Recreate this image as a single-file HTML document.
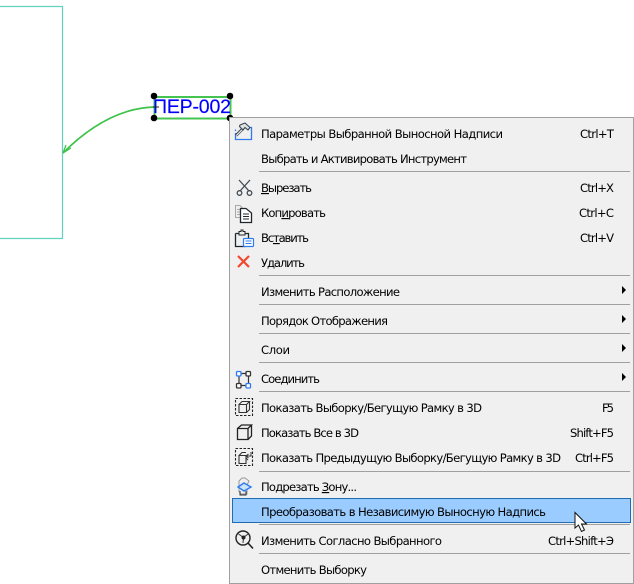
<!DOCTYPE html>
<html><head><meta charset="utf-8"><style>
html,body{margin:0;padding:0;background:#fff;width:634px;height:584px;overflow:hidden}
svg{display:block}
.t{font-family:"DejaVu Sans",sans-serif;font-size:11.6px;fill:#000}
</style></head><body>
<svg width="634" height="584" viewBox="0 0 634 584" xmlns="http://www.w3.org/2000/svg">
<rect width="634" height="584" fill="#fff"/>
<path d="M0 6.500H62.500V238.500H0" fill="none" stroke="#62d2bc" stroke-width="1.200"/>
<path d="M154 107C122 108 92 124 63 153" fill="none" stroke="#3fc24a" stroke-width="1.700"/>
<path d="M63 153L66 145M63 153L71 148" fill="none" stroke="#3fc24a" stroke-width="1.300"/>
<rect x="154.500" y="97" width="76" height="21.500" fill="none" stroke="#45c452" stroke-width="2"/>
<text x="153" y="113" font-family="Liberation Sans,sans-serif" font-size="19.500" fill="#0000ff" stroke="#0000ff" stroke-width="0.150" textLength="78" lengthAdjust="spacing">ПЕР-002</text>
<path d="M153 107H159" stroke="#222"/>
<g fill="#000"><circle cx="154" cy="96" r="3.300"/><circle cx="230" cy="96" r="3.300"/><circle cx="154" cy="118" r="3.300"/><circle cx="230" cy="118" r="3.300"/></g>

<rect x="229.500" y="117.500" width="404" height="466" fill="#f0f0f0" stroke="#a0a0a0"/>
<rect x="232.500" y="498.500" width="398" height="24" fill="#9accff" stroke="#1f6cb5"/>
<g fill="#a0a0a0">
<rect x="259" y="171" width="371" height="1"/><rect x="259" y="275" width="371" height="1"/>
<rect x="259" y="304" width="371" height="1"/><rect x="259" y="333" width="371" height="1"/>
<rect x="259" y="362" width="371" height="1"/><rect x="259" y="391" width="371" height="1"/>
<rect x="259" y="471" width="371" height="1"/><rect x="259" y="524" width="371" height="1"/>
<rect x="259" y="553" width="371" height="1"/>
</g>

<g class="t">
<text class="t" x="261" y="138" textLength="242">Параметры Выбранной Выносной Надписи</text>
<text class="t" x="261" y="163" textLength="206">Выбрать и Активировать Инструмент</text>
<text class="t" x="261" y="192" textLength="51"><tspan text-decoration="underline">В</tspan>ырезать</text>
<text class="t" x="261" y="217" textLength="65">Коп<tspan text-decoration="underline">и</tspan>ровать</text>
<text class="t" x="261" y="242" textLength="48">Вс<tspan text-decoration="underline">т</tspan>авить</text>
<text class="t" x="261" y="267" textLength="44">Удалить</text>
<text class="t" x="261" y="296" textLength="139">Изменить Расположение</text>
<text class="t" x="261" y="325" textLength="127">Порядок Отображения</text>
<text class="t" x="261" y="354" textLength="29">Слои</text>
<text class="t" x="261" y="383" textLength="59">Соединить</text>
<text class="t" x="261" y="412" textLength="221">Показать Выборку/Бегущую Рамку в 3D</text>
<text class="t" x="261" y="437" textLength="98">Показать Все в 3D</text>
<text class="t" x="261" y="462" textLength="300">Показать Предыдущую Выборку/Бегущую Рамку в 3D</text>
<text class="t" x="261" y="491" textLength="96">Подрезать <tspan text-decoration="underline">З</tspan>ону...</text>
<text class="t" x="261" y="516" textLength="285">Преобразовать в Независимую Выносную Надпись</text>
<text class="t" x="261" y="545" textLength="181">Изменить Согласно Выбранного</text>
<text class="t" x="261" y="574" textLength="106">Отменить Выборку</text>
<text class="t" x="580" y="138" textLength="34">Ctrl+T</text>
<text class="t" x="580" y="192" textLength="34">Ctrl+X</text>
<text class="t" x="579" y="217" textLength="35">Ctrl+C</text>
<text class="t" x="580" y="242" textLength="34">Ctrl+V</text>
<text class="t" x="602" y="412" textLength="12">F5</text>
<text class="t" x="570" y="437" textLength="44">Shift+F5</text>
<text class="t" x="575" y="462" textLength="39">Ctrl+F5</text>
<text class="t" x="548" y="545" textLength="66">Ctrl+Shift+Э</text>
</g>

<g fill="#000">
<path d="M622 286l4 4-4 4z"/><path d="M622 315l4 4-4 4z"/><path d="M622 344l4 4-4 4z"/><path d="M622 373l4 4-4 4z"/>
</g>

<!-- hammer / params -->
<path d="M235.500 133V139.500H251.500V127.500H248M235.500 129.500V131" fill="none" stroke="#2e7cf0" stroke-width="1.300"/>
<path d="M236 135.500L243 128.500" stroke="#3a4650" stroke-width="3" fill="none"/>
<path d="M236.300 135.500L243 128.800" stroke="#e8e8e8" stroke-width="1.200" fill="none"/>
<path d="M240 125L245 123L250 127.500L248 130L245 127.500L243 130L239.500 126.500Z" fill="#dfe3e6" stroke="#3a4650" stroke-width="1.100"/>
<!-- scissors -->
<g fill="none" stroke="#3f4a54" stroke-width="1.300">
<path d="M239 180L249 191M250 180L240 191"/>
<circle cx="239.500" cy="193" r="2.300"/><circle cx="249.500" cy="193" r="2.300"/>
</g>
<!-- copy -->
<path d="M235.500 205.500H240L242 207.500V217.500H235.500Z" fill="#f0f0f0" stroke="#a8a8a8"/>
<path d="M237 209.500H240M237 212H240M237 214.500H240" stroke="#a8a8a8"/>
<path d="M240.500 208.500H246L251.500 213V222.500H240.500Z" fill="#fff" stroke="#1f262c" stroke-width="1.300"/>
<path d="M243 214H249M243 216.500H249M243 219H249" stroke="#1f262c"/>
<!-- paste -->
<path d="M235.500 233.500H239M245 233.500H248.500V238M245.500 246.500H235.500V233.500" fill="none" stroke="#1f262c" stroke-width="1.300"/>
<path d="M239 233V231.500H241V230H243V231.500H245V235H239Z" fill="#f0f0f0" stroke="#1f262c"/>
<rect x="243.500" y="238.500" width="10" height="8" rx="1" fill="#fff" stroke="#2e7cf0" stroke-width="1.200"/>
<path d="M245.500 241H251.500M245.500 243.500H251.500" stroke="#2e7cf0"/>
<!-- delete -->
<path d="M238 256L249 267M249 256L238 267" stroke="#f4472c" stroke-width="2.200" fill="none"/>
<!-- connect -->
<path d="M241 373.500H246M241 385.500H246M239 376V383M248.500 376V383" stroke="#333" fill="none" stroke-width="1.200"/>
<rect x="236.500" y="371.500" width="4.500" height="4.500" rx="1" fill="#fff" stroke="#2e7cf0" stroke-width="1.300"/>
<rect x="246" y="371.500" width="4.500" height="4.500" rx="1" fill="#fff" stroke="#333" stroke-width="1.300"/>
<rect x="236.500" y="383.500" width="4.500" height="4.500" rx="1" fill="#fff" stroke="#333" stroke-width="1.300"/>
<rect x="246" y="383.500" width="4.500" height="4.500" rx="1" fill="#fff" stroke="#2e7cf0" stroke-width="1.300"/>
<!-- show selection 3D -->
<rect x="235.500" y="398.500" width="17" height="17" fill="none" stroke="#222" stroke-dasharray="2.500 1.500" stroke-width="1.100"/>
<path d="M239 404.500V412.500H246.500V404.500ZM239 404.500L242 401.500H249.500L246.500 404.500M249.500 401.500V409.500L246.500 412.500" fill="none" stroke="#333" stroke-width="1.100"/>
<!-- show all 3D -->
<path d="M237.500 428.500V439.500H248V428.500ZM237.500 428.500L241.500 425H251.500L248 428.500M251.500 425V436L248 439.500" fill="none" stroke="#222" stroke-width="1.300"/>
<!-- show previous -->
<rect x="235.500" y="448.500" width="17" height="17" fill="none" stroke="#222" stroke-dasharray="2.500 1.500" stroke-width="1.100"/>
<path d="M239 455.500V463.500H246V455.500ZM239 455.500L242 452.500H246" fill="none" stroke="#333" stroke-width="1.100"/>
<path d="M246 458L248 460M251 452V456H246.500M248.500 454L246 456L248.500 458" fill="none" stroke="#333"/>
<!-- trim zone -->
<path d="M239 481V491.500L241 494H247V485L249 481L245 478H242Z" fill="#eee" stroke="#999"/>
<path d="M238 487L244 483L251 487L244 491Z" fill="#cfe3fb" stroke="#2e7cf0" stroke-width="1.400"/>
<path d="M240 491V495H246V491" fill="none" stroke="#333"/>
<!-- modify -->
<circle cx="243" cy="538" r="7" fill="none" stroke="#222" stroke-width="1.400"/>
<path d="M238.500 534L243.500 537.500L248 534M243.500 537.500L243 543" fill="none" stroke="#333"/>
<circle cx="243.500" cy="537.500" r="2" fill="#222"/>
<path d="M248 543L253 548.500" stroke="#222" stroke-width="1.600"/>
<!-- cursor -->
<path d="M575 512.500V528L578.500 525L581.500 531.500L584.500 530L581.500 524L586.500 524Z" fill="#fff" stroke="#111"/>
</svg>
</body></html>
